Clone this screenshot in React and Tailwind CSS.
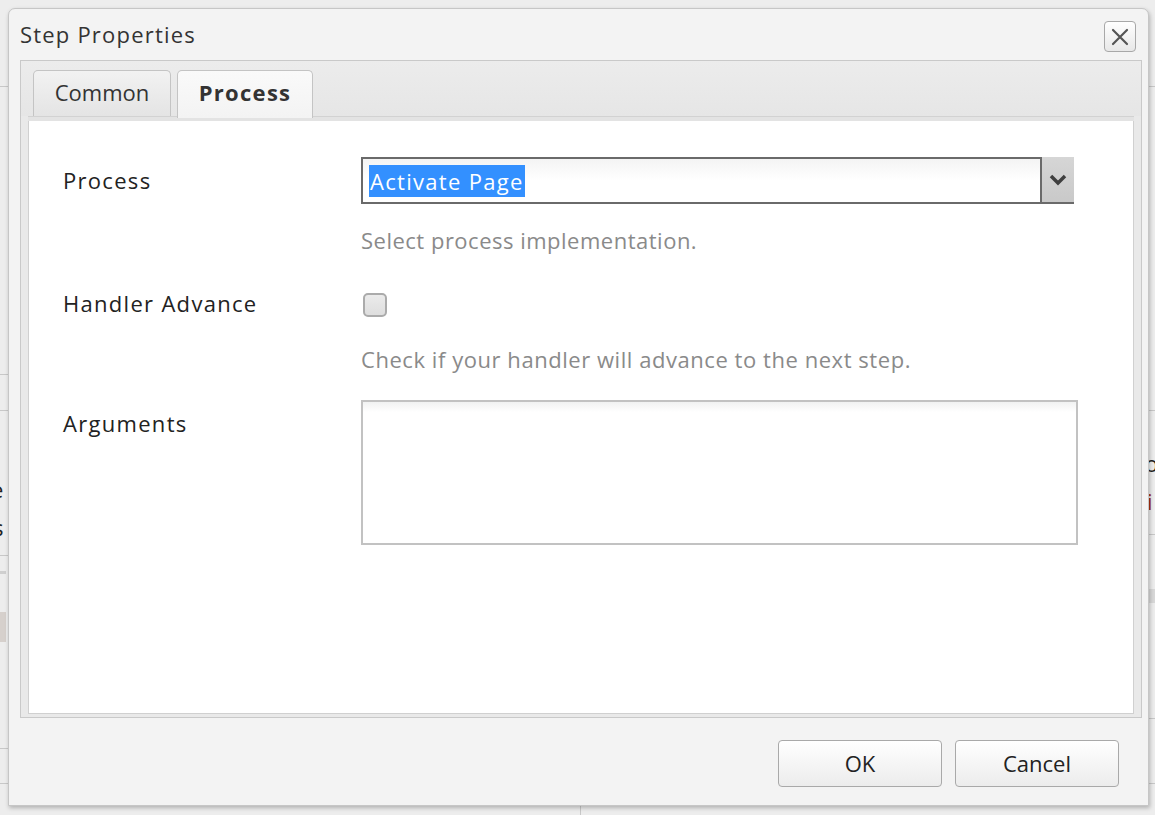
import React from 'react';

const font = { fontFamily: '"Open Sans", "Noto Sans", sans-serif' };

// --- small pieces ---
function CloseButton() {
    return (
        <button className="w-[32px] h-[31px] mt-[12px] mr-[12px] rounded-[4px] border border-[#a8a8a8] bg-gradient-to-b from-white to-[#e8e8e8] flex items-center justify-center">
            <svg width="20" height="20" viewBox="0 0 20 20">
                <path d="M3 3 L17 17 M17 3 L3 17" stroke="#555" strokeWidth="2.2" strokeLinecap="round" />
            </svg>
        </button>
    );
}

function Tab({ label, active }) {
    if (active) {
        return (
            <div className="w-[136px] h-[48px] mb-[-2px] pb-[5px] rounded-t-[5px] border border-b-0 border-[#c4c4c4] bg-gradient-to-b from-[#fafafa] to-[#f3f3f3] flex items-center justify-center text-[22px] tracking-[1.3px] font-bold text-[#333] relative z-10">
                {label}
            </div>
        );
    }
    return (
        <div className="w-[138px] h-[46px] pb-[3px] rounded-t-[5px] border border-b-0 border-[#c4c4c4] bg-gradient-to-b from-[#f2f2f2] to-[#e4e4e4] flex items-center justify-center text-[22px] text-[#333]">
            {label}
        </div>
    );
}

function FooterButton({ children }) {
    return (
        <button className="w-[164px] h-[47px] rounded-[4px] border border-[#a9a9a9] bg-gradient-to-b from-white to-[#ececec] text-[22px] text-[#222] shadow-[inset_0_1px_0_#fff]">
            {children}
        </button>
    );
}

export default function App() {
    return (
        <div className="w-[1155px] h-[815px] bg-[#ededed] relative overflow-hidden" style={font}>
            {/* bits of the page behind the dialog */}
            <div className="absolute left-0 top-[86px] w-[8px] h-[1px] bg-[#c8c8c8]" />
            <div className="absolute left-0 top-[374px] w-[8px] h-[1px] bg-[#c8c8c8]" />
            <div className="absolute left-0 top-[410px] w-[8px] h-[1px] bg-[#c8c8c8]" />
            <div className="absolute left-0 top-[555px] w-[8px] h-[1px] bg-[#c8c8c8]" />
            <div className="absolute left-0 top-[571px] w-[6px] h-[3px] bg-[#cfcfcf]" />
            <div className="absolute left-0 top-[612px] w-[6px] h-[30px] bg-[#d6d0cc]" />
            <div className="absolute left-0 top-[748px] w-[8px] h-[1px] bg-[#c8c8c8]" />
            <div className="absolute left-0 top-[783px] w-[8px] h-[1px] bg-[#c8c8c8]" />
            <div className="absolute left-[-9px] top-[478px] text-[22px] text-[#222] leading-none">e</div>
            <div className="absolute left-[-7px] top-[516px] text-[22px] text-[#222] leading-none">s</div>
            <div className="absolute left-[1148px] top-[86px] w-[8px] h-[1px] bg-[#c8c8c8]" />
            <div className="absolute left-[1148px] top-[410px] w-[8px] h-[1px] bg-[#c8c8c8]" />
            <div className="absolute left-[1148px] top-[534px] w-[8px] h-[1px] bg-[#c8c8c8]" />
            <div className="absolute left-[1148px] top-[589px] w-[8px] h-[14px] bg-[#d8d8d8]" />
            <div className="absolute left-[1148px] top-[718px] w-[8px] h-[1px] bg-[#c8c8c8]" />
            <div className="absolute left-[1148px] top-[783px] w-[8px] h-[1px] bg-[#c8c8c8]" />
            <div className="absolute left-[1145px] top-[452px] text-[22px] text-[#222] leading-none">o</div>
            <div className="absolute left-[1147px] top-[490px] text-[22px] text-[#a03010] leading-none">i</div>
            <div className="absolute left-[580px] top-[806px] w-[1px] h-[9px] bg-[#c8c8c8]" />

            {/* dialog */}
            <div className="absolute left-[8px] top-[8px] w-[1141px] h-[798px] rounded-t-[7px] border border-[#c6c6c6] bg-[#f3f3f3] shadow-[1px_2px_4px_rgba(0,0,0,0.25)] flex flex-col">
                {/* title */}
                <div className="h-[51px] flex items-start justify-between">
                    <div className="pl-[11px] pt-[9px] text-[22px] tracking-[1.2px] leading-[32px] text-[#333]">Step Properties</div>
                    <CloseButton />
                </div>

                {/* tab panel */}
                <div className="ml-[11px] mr-[6px] h-[658px] border border-[#c9c9c9] bg-[#e9e9e9] flex flex-col">
                    <div className="h-[55px] pl-[12px] pt-[9px] flex items-end gap-[6px] bg-gradient-to-b from-[#ececec] to-[#e6e6e6]">
                        <Tab label="Common" />
                        <Tab label="Process" active />
                    </div>
                    <div className="h-[5px] mx-[7px] bg-[#e3e3e3] border-t border-[#d2d2d2]" />
                    <div className="flex-1 mx-[7px] mb-[3px] bg-white border border-t-0 border-[#d0d0d0] pt-[36px]">
                        {/* Process */}
                        <div className="flex">
                            <div className="w-[332px] pl-[34px] text-[22px] tracking-[1.3px] leading-[47px] text-[#222]">Process</div>
                            <div className="w-[713px] h-[47px] border-2 border-[#6a6a6a] bg-gradient-to-b from-[#f4f4f4] via-white to-white flex">
                                <div className="flex-1 flex items-center pl-[6px]">
                                    <span className="bg-[#3390ff] text-white text-[22px] tracking-[1.3px] leading-[32px] px-[1px]">Activate Page</span>
                                </div>
                                <div className="w-[34px] -my-[2px] -mr-[2px] bg-gradient-to-b from-[#d6d6d6] to-[#c9c9c9] border-l-2 border-[#6a6a6a] border-b-2 flex items-center justify-center">
                                    <svg width="18" height="12" viewBox="0 0 18 12">
                                        <path d="M2 2 L9 9 L16 2" stroke="#3f3f3f" strokeWidth="3.5" fill="none" strokeLinejoin="miter" />
                                    </svg>
                                </div>
                            </div>
                        </div>
                        <div className="ml-[332px] mt-[21px] text-[22px] tracking-[0.5px] leading-[30px] text-[#8a8a8a]">Select process implementation.</div>

                        {/* Handler Advance */}
                        <div className="flex mt-[38px]">
                            <div className="w-[332px] pl-[34px] -mt-[5px] text-[22px] tracking-[1.3px] leading-[30px] text-[#222]">Handler Advance</div>
                            <div className="ml-[2px] w-[24px] h-[24px] rounded-[5px] border-2 border-[#ababab] bg-gradient-to-b from-[#ebebeb] to-[#dedede]" />
                        </div>
                        <div className="ml-[332px] mt-[26px] text-[22px] tracking-[0.55px] leading-[30px] text-[#8a8a8a]">Check if your handler will advance to the next step.</div>

                        {/* Arguments */}
                        <div className="flex mt-[26px]">
                            <div className="w-[332px] pl-[34px] mt-[8px] text-[22px] tracking-[1.3px] leading-[30px] text-[#222]">Arguments</div>
                            <div className="w-[717px] h-[145px] border-2 border-[#c2c2c2] bg-gradient-to-b from-[#f1f2f2] via-white to-white bg-[length:100%_20px] bg-no-repeat bg-white" />
                        </div>
                    </div>
                </div>

                {/* footer */}
                <div className="flex justify-end gap-[13px] pr-[29px] pt-[22px]">
                    <FooterButton>OK</FooterButton>
                    <FooterButton>Cancel</FooterButton>
                </div>
            </div>
        </div>
    );
}
